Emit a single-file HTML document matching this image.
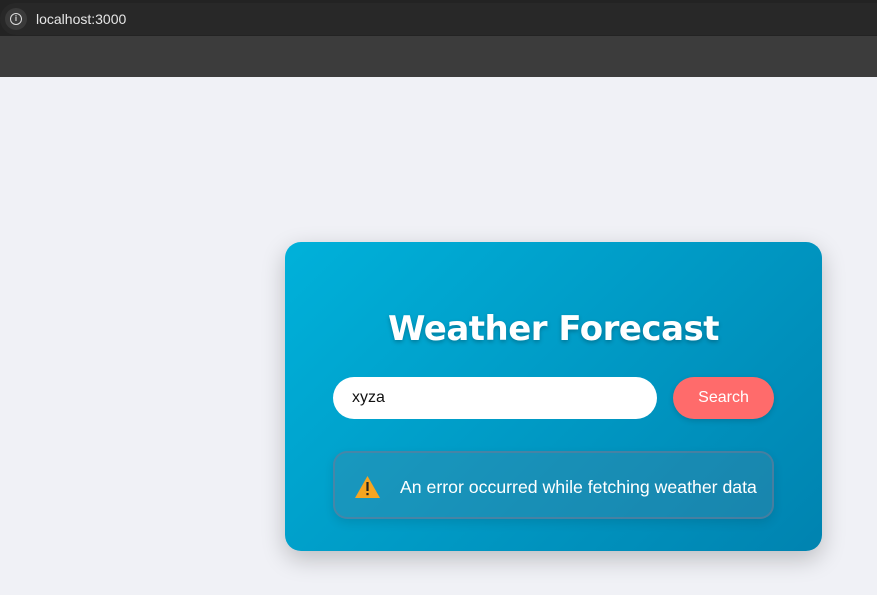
<!DOCTYPE html>
<html><head><style>
*{margin:0;padding:0;box-sizing:border-box}
body{width:877px;height:595px;overflow:hidden;background:#f0f1f6;font-family:"Liberation Sans",sans-serif;position:relative}
.top{position:absolute;left:0;top:0;width:877px;height:36px;background:#232323}
.bar2{position:absolute;left:0;top:36px;width:877px;height:41px;background:#3c3c3c}
.url{position:absolute;left:0;top:3px;width:877px;height:32px;background:#282828;border-radius:16px 0 0 16px}
.ic{position:absolute;left:5px;top:5px;width:22px;height:22px;border-radius:50%;background:#3a3a3a}
.ic span{position:absolute;left:5px;top:5px;width:12px;height:12px;border:1.5px solid #ddd;border-radius:50%;font-size:8px;color:#ddd;text-align:center;line-height:9px;font-weight:bold}
.ut{position:absolute;left:36px;top:8px;font-size:14px;color:#e6e6e6}
.card{position:absolute;left:285px;top:242px;width:537px;height:309px;border-radius:16px;background:linear-gradient(135deg,#00b1da,#0083b0);box-shadow:0 8px 24px rgba(0,0,0,.22)}
h1{position:absolute;left:0;width:537px;top:67px;text-align:center;color:#fff;font-size:34px;font-weight:bold;text-shadow:0 2px 4px rgba(0,0,0,.25);font-family:"DejaVu Sans","Liberation Sans",sans-serif;letter-spacing:-0.5px}
.in{position:absolute;left:48px;top:135px;width:324px;height:42px;background:#fff;border-radius:21px;font-size:16px;padding:12px 0 0 19px;color:#111}
.btn{position:absolute;left:388px;top:135px;width:101px;height:42px;background:#ff6b6b;border-radius:21px;color:#fff;font-size:16px;text-align:center;line-height:42px;box-shadow:0 2px 6px rgba(0,0,0,.15)}
.err{position:absolute;left:48px;top:209px;width:441px;height:68px;border-radius:14px;background:rgba(80,130,160,.3);border:2px solid rgba(110,120,150,.55);box-shadow:0 4px 10px rgba(0,0,0,.1)}
.err svg{position:absolute;left:20px;top:23px}
.et{position:absolute;left:65px;top:24px;color:#fff;font-size:17.7px}
</style></head><body>
<div class="top"></div><div class="bar2"></div>
<div class="url"><div class="ic"><span>i</span></div><div class="ut">localhost:3000</div></div>
<div class="card">
<h1>Weather Forecast</h1>
<div class="in">xyza</div>
<div class="btn">Search</div>
<div class="err"><svg width="25" height="22" viewBox="0 0 25 22"><path d="M12.5 0L25 22H0Z" fill="#f7a520"/><rect x="11.4" y="6" width="2.2" height="9" fill="#222"/><rect x="11.4" y="17" width="2.2" height="2.2" fill="#222"/></svg><div class="et">An error occurred while fetching weather data</div></div>
</div>
</body></html>
